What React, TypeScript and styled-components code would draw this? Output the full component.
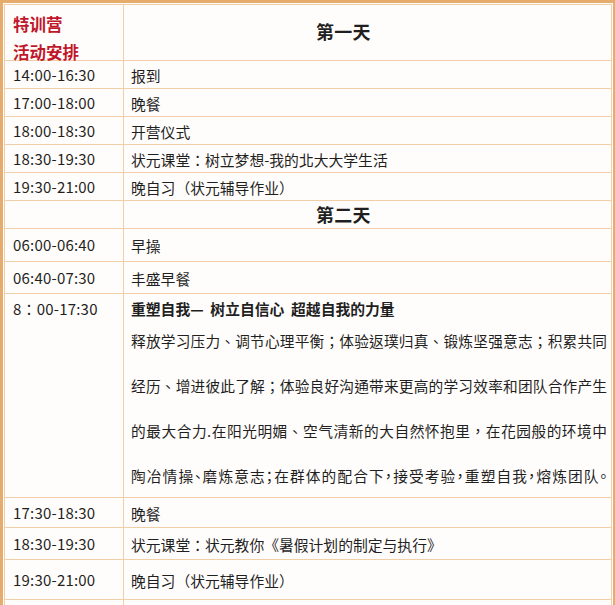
import React from 'react'
import styled, { createGlobalStyle } from 'styled-components'

const GlobalStyle = createGlobalStyle`
  html, body {
    margin: 0;
    padding: 0;
    background: #ffffff;
  }
  body {
    font-family: 'Noto Sans CJK TC', 'Noto Sans CJK SC', 'Noto Sans', sans-serif;
    color: #1f1f1f;
  }
`

const Frame = styled.div`
  width: 608px;
  border: 3px solid #e6ac6c;
  padding: 1px;
  background: #fffdfb;
`

const Table = styled.div`
  border: 1px solid #f0cfa8;
  border-bottom: none;
`

interface RowProps {
  readonly $h: number
}

const Row = styled.div<RowProps>`
  display: grid;
  grid-template-columns: 119px 1fr;
  height: ${props => props.$h}px;
  border-bottom: 1px solid #f0cfa8;
`

interface CellProps {
  readonly $top?: boolean
}

const TimeCell = styled.div<CellProps>`
  border-right: 1px solid #f0cfa8;
  padding: ${props => props.$top ? '4px 0 0 8px' : '0 0 0 8px'};
  display: flex;
  align-items: ${props => props.$top ? 'flex-start' : 'center'};
  font-size: 15px;
  line-height: 22px;
  letter-spacing: 0.2px;
  white-space: nowrap;
`

const TextCell = styled.div<CellProps>`
  padding: ${props => props.$top ? '4px 4px 0 7px' : '2px 0 0 7px'};
  display: flex;
  flex-direction: column;
  justify-content: ${props => props.$top ? 'flex-start' : 'center'};
  font-size: 14.8px;
  line-height: 22px;
  white-space: nowrap;
`

const TitleCell = styled.div`
  border-right: 1px solid #f0cfa8;
  padding: 5px 0 0 8px;
  color: #c0172b;
  font-weight: 700;
  font-size: 16.5px;
  line-height: 28px;
`

interface DayProps {
  readonly $lift?: number
}

const DayCell = styled.div<DayProps>`
  display: flex;
  align-items: center;
  padding: 0 0 ${props => props.$lift ?? 2}px 192px;
  font-weight: 700;
  font-size: 18px;
  letter-spacing: 0.3px;
`

const Heading = styled.div`
  font-weight: 700;
`

const Body = styled.div`
  margin-top: -2px;
  line-height: 45px;
  font-size: 14.7px;
`

interface LineProps {
  readonly $tight?: boolean
}

const BodyLine = styled.div<LineProps>`
  text-align: justify;
  text-align-last: justify;
  font-feature-settings: ${props => props.$tight ? "'palt'" : 'normal'};
`

const dayOne: [string, string][] = [
  ['14:00-16:30', '报到'],
  ['17:00-18:00', '晚餐'],
  ['18:00-18:30', '开营仪式'],
  ['18:30-19:30', '状元课堂：树立梦想-我的北大大学生活'],
  ['19:30-21:00', '晚自习（状元辅导作业）'],
]

const bodyLines = [
  '释放学习压力、调节心理平衡；体验返璞归真、锻炼坚强意志；积累共同',
  '经历、增进彼此了解；体验良好沟通带来更高的学习效率和团队合作产生',
  '的最大合力.在阳光明媚、空气清新的大自然怀抱里，在花园般的环境中',
  '陶冶情操、磨炼意志；在群体的配合下，接受考验，重塑自我，熔炼团队。',
]

export default function App () {
  return (
    <>
      <GlobalStyle />
      <Frame>
        <Table>
          <Row $h={55}>
            <TitleCell>特训营<br />活动安排</TitleCell>
            <DayCell $lift={9}>第一天</DayCell>
          </Row>
          {dayOne.map(([time, text]) => (
            <Row $h={27} key={time}>
              <TimeCell>{time}</TimeCell>
              <TextCell>{text}</TextCell>
            </Row>
          ))}
          <Row $h={27}>
            <TimeCell />
            <DayCell>第二天</DayCell>
          </Row>
          <Row $h={32}>
            <TimeCell>06:00-06:40</TimeCell>
            <TextCell>早操</TextCell>
          </Row>
          <Row $h={31}>
            <TimeCell>06:40-07:30</TimeCell>
            <TextCell>丰盛早餐</TextCell>
          </Row>
          <Row $h={203}>
            <TimeCell $top>8：00-17:30</TimeCell>
            <TextCell $top>
              <Heading>重塑自我— &nbsp;树立自信心 &nbsp;超越自我的力量</Heading>
              <Body>
                {bodyLines.map((line, i) => (
                  <BodyLine key={line} $tight={i === bodyLines.length - 1}>{line}</BodyLine>
                ))}
              </Body>
            </TextCell>
          </Row>
          <Row $h={29}>
            <TimeCell>17:30-18:30</TimeCell>
            <TextCell>晚餐</TextCell>
          </Row>
          <Row $h={31}>
            <TimeCell>18:30-19:30</TimeCell>
            <TextCell>状元课堂：状元教你《暑假计划的制定与执行》</TextCell>
          </Row>
          <Row $h={39}>
            <TimeCell>19:30-21:00</TimeCell>
            <TextCell>晚自习（状元辅导作业）</TextCell>
          </Row>
          <Row $h={40}>
            <TimeCell />
            <TextCell />
          </Row>
        </Table>
      </Frame>
    </>
  )
}
